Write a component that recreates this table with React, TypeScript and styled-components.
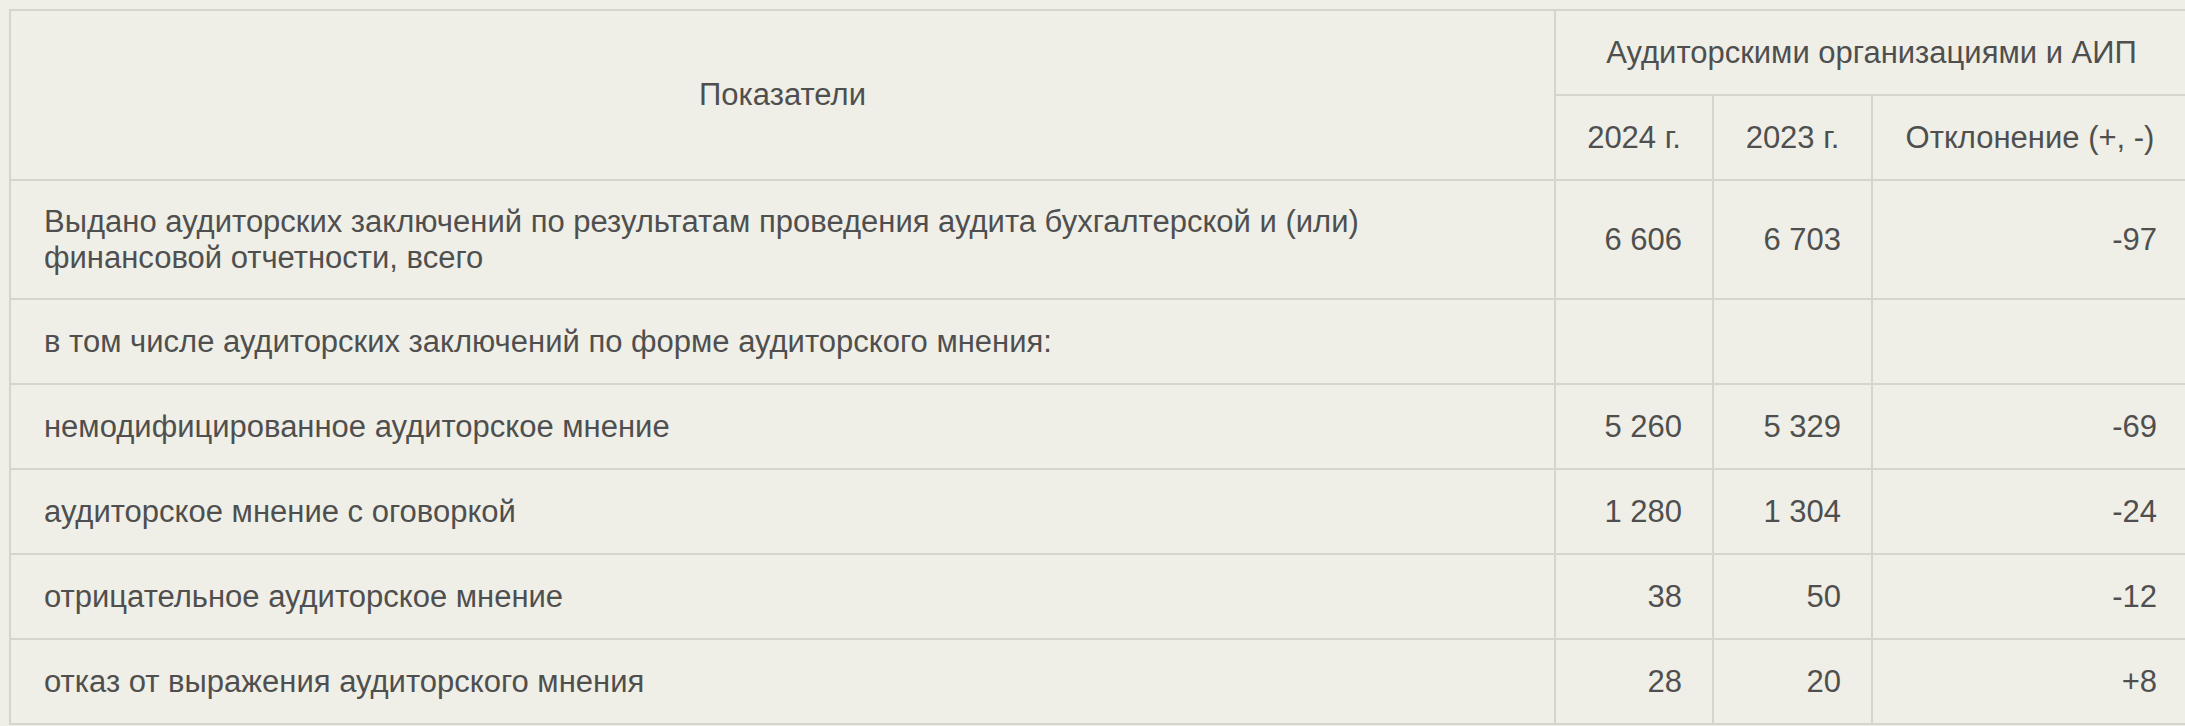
import styled, { createGlobalStyle } from "styled-components";

const GlobalStyle = createGlobalStyle`
  html, body {
    margin: 0;
    padding: 0;
    overflow: hidden;
    background: #efefe7;
  }
`;

type Row = {
  label: string;
  lines?: string[];
  y2024?: string;
  y2023?: string;
  diff?: string;
};

const rows: Row[] = [
  {
    label: "total",
    lines: [
      "Выдано аудиторских заключений по результатам проведения аудита бухгалтерской и (или)",
      "финансовой отчетности, всего",
    ],
    y2024: "6 606",
    y2023: "6 703",
    diff: "-97",
  },
  { label: "в том числе аудиторских заключений по форме аудиторского мнения:" },
  { label: "немодифицированное аудиторское мнение", y2024: "5 260", y2023: "5 329", diff: "-69" },
  { label: "аудиторское мнение с оговоркой", y2024: "1 280", y2023: "1 304", diff: "-24" },
  { label: "отрицательное аудиторское мнение", y2024: "38", y2023: "50", diff: "-12" },
  { label: "отказ от выражения аудиторского мнения", y2024: "28", y2023: "20", diff: "+8" },
];

export default function App() {
  return (
    <>
      <GlobalStyle />
      <Page>
        <Table>
          <colgroup>
            <col style={{ width: 1545 }} />
            <col style={{ width: 158 }} />
            <col style={{ width: 159 }} />
            <col style={{ width: 316 }} />
          </colgroup>
          <thead>
            <tr>
              <HeadCell rowSpan={2}>Показатели</HeadCell>
              <HeadCell colSpan={3}>Аудиторскими организациями и АИП</HeadCell>
            </tr>
            <tr>
              <HeadCell>2024 г.</HeadCell>
              <HeadCell>2023 г.</HeadCell>
              <HeadCell>Отклонение (+, -)</HeadCell>
            </tr>
          </thead>
          <tbody>
            {rows.map((r) => (
              <tr key={r.label}>
                <LabelCell $tight={!!r.lines}>
                  {r.lines
                    ? r.lines.map((l, i) => (
                        <span key={l}>
                          {i > 0 && <br />}
                          {l}
                        </span>
                      ))
                    : r.label}
                </LabelCell>
                <NumCell>{r.y2024}</NumCell>
                <NumCell>{r.y2023}</NumCell>
                <NumCell>{r.diff}</NumCell>
              </tr>
            ))}
          </tbody>
        </Table>
      </Page>
    </>
  );
}

const Page = styled.div`
  padding: 9px 0 0 9px;
  width: 2300px;
  font-family: "Liberation Sans", Arial, sans-serif;
  color: #4f4f4f;
`;

const Table = styled.table`
  border-collapse: collapse;
  table-layout: fixed;
  width: 2178px;
  font-size: 31px;
  line-height: 36px;
`;

const Cell = styled.td`
  border: 2px solid #d5d5cd;
  padding: 23.5px 30px;
  vertical-align: middle;
  font-weight: normal;
`;

const HeadCell = styled(Cell).attrs({ as: "th" })`
  text-align: center;
`;

const LabelCell = styled(Cell)<{ $tight?: boolean }>`
  text-align: left;
  padding-left: 33px;
  padding-top: ${(p) => (p.$tight ? "22.5px" : "23.5px")};
  padding-bottom: ${(p) => (p.$tight ? "22.5px" : "23.5px")};
`;

const NumCell = styled(Cell)`
  text-align: right;
`;
